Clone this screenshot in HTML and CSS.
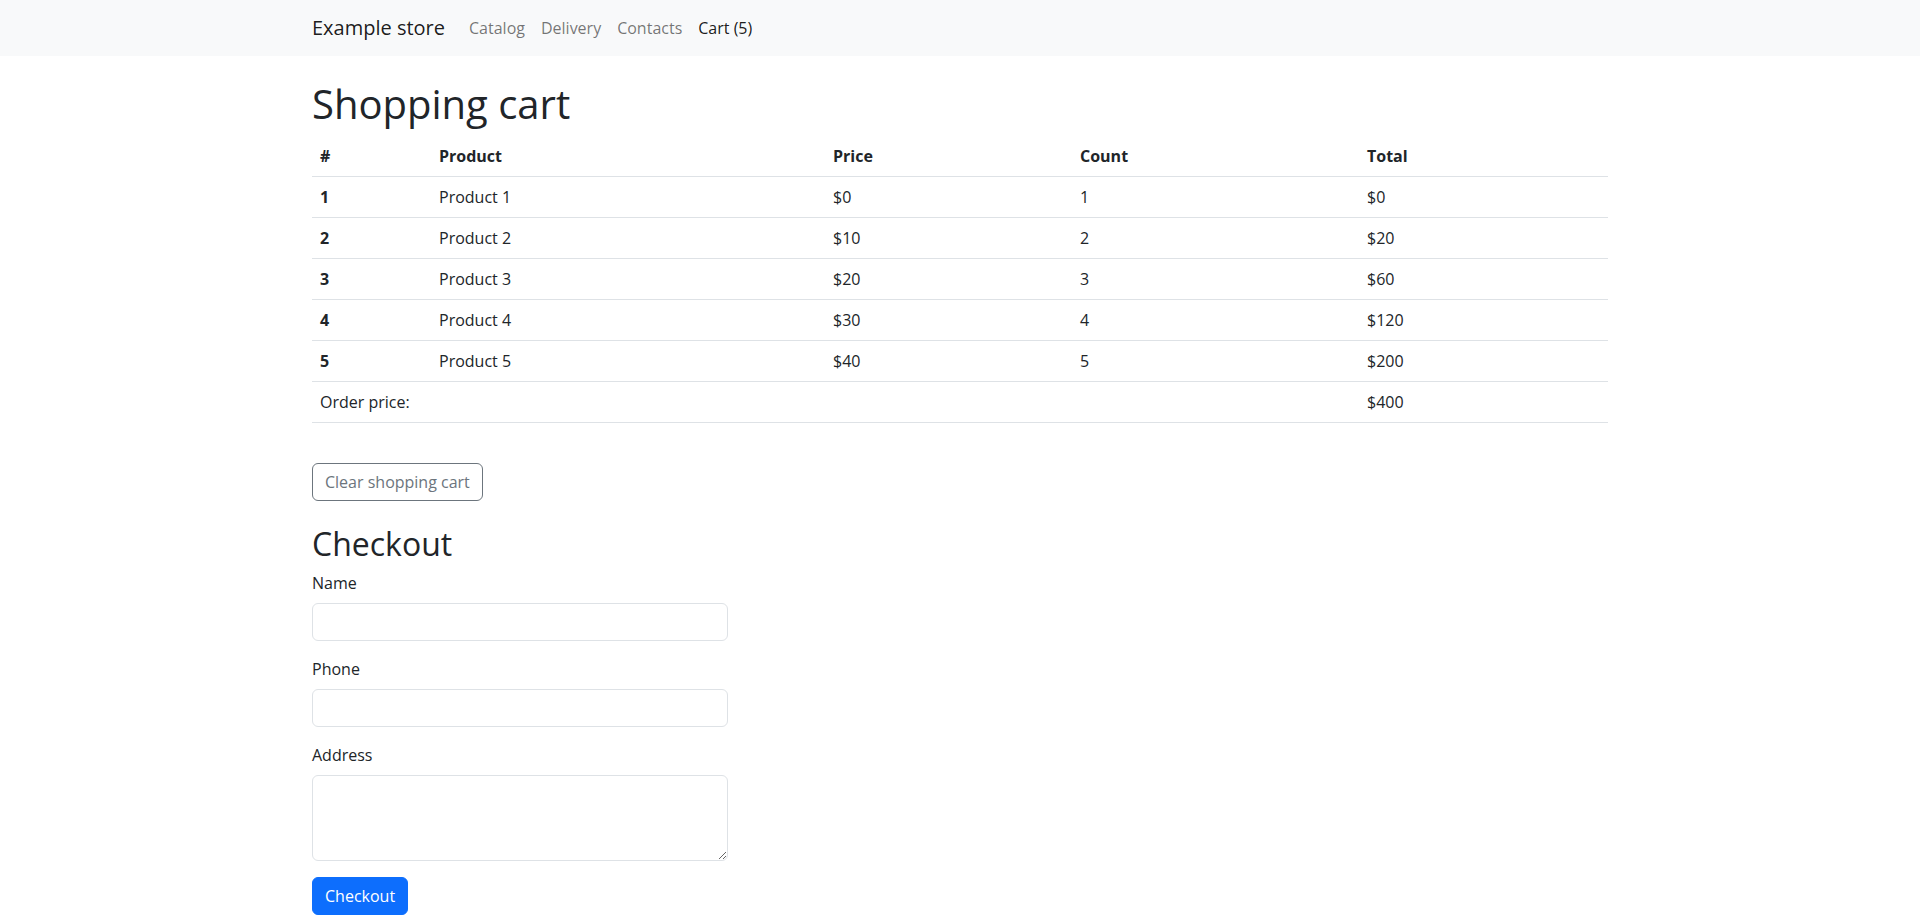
FILE: index.html
```html
<!DOCTYPE html>
<html lang="en">
<head>
<meta charset="utf-8">
<title>Example store</title>
<link rel="stylesheet" href="styles.css">
</head>
<body>
<nav class="navbar">
  <div class="container nav-inner">
    <a class="brand" href="#">Example store</a>
    <ul class="nav-links">
      <li><a class="nav-link" href="#">Catalog</a></li>
      <li><a class="nav-link" href="#">Delivery</a></li>
      <li><a class="nav-link" href="#">Contacts</a></li>
      <li><a class="nav-link active" href="#">Cart (5)</a></li>
    </ul>
  </div>
</nav>
<main class="container">
  <h1 class="title">Shopping cart</h1>
  <table class="cart-table">
    <colgroup>
      <col class="c-num">
      <col class="c-product">
      <col class="c-price">
      <col class="c-count">
      <col class="c-total">
    </colgroup>
    <thead>
      <tr><th>#</th><th>Product</th><th>Price</th><th>Count</th><th>Total</th></tr>
    </thead>
    <tbody>
      <tr><th>1</th><td>Product 1</td><td>$0</td><td>1</td><td>$0</td></tr>
      <tr><th>2</th><td>Product 2</td><td>$10</td><td>2</td><td>$20</td></tr>
      <tr><th>3</th><td>Product 3</td><td>$20</td><td>3</td><td>$60</td></tr>
      <tr><th>4</th><td>Product 4</td><td>$30</td><td>4</td><td>$120</td></tr>
      <tr><th>5</th><td>Product 5</td><td>$40</td><td>5</td><td>$200</td></tr>
      <tr><td colspan="4">Order price:</td><td>$400</td></tr>
    </tbody>
  </table>
  <div class="actions">
    <button class="btn btn-outline" type="button">Clear shopping cart</button>
  </div>
  <h2 class="subtitle">Checkout</h2>
  <form class="checkout-form">
    <div class="field">
      <label class="form-label" for="name">Name</label>
      <input class="form-control" id="name" type="text">
    </div>
    <div class="field">
      <label class="form-label" for="phone">Phone</label>
      <input class="form-control" id="phone" type="text">
    </div>
    <div class="field">
      <label class="form-label" for="address">Address</label>
      <textarea class="form-control textarea" id="address" rows="3"></textarea>
    </div>
    <button class="btn btn-primary" type="button">Checkout</button>
  </form>
</main>
</body>
</html>
```
FILE: styles.css
```css
* { box-sizing: border-box; }
body {
  margin: 0;
  font-family: "Open Sans", "Noto Sans", sans-serif;
  font-size: 16px;
  line-height: 1.5;
  color: #212529;
  background: #fff;
}
.container {
  max-width: 1320px;
  margin: 0 auto;
  padding: 0 12px;
}
.navbar {
  background: #f8f9fa;
  padding: 8px 0;
}
.nav-inner {
  display: flex;
  align-items: center;
}
.brand {
  font-size: 20px;
  line-height: 30px;
  padding: 5px 0;
  margin-right: 16px;
  color: rgba(0,0,0,.9);
  text-decoration: none;
}
.nav-links {
  display: flex;
  list-style: none;
  margin: 0;
  padding: 0;
}
.nav-link {
  display: block;
  padding: 8px;
  color: rgba(0,0,0,.55);
  text-decoration: none;
}
.nav-link.active { color: rgba(0,0,0,.9); }
.title {
  font-size: 40px;
  font-weight: 500;
  line-height: 1.2;
  margin: 24px 0 8px;
}
.cart-table {
  width: 100%;
  border-collapse: collapse;
  table-layout: fixed;
  margin-bottom: 16px;
}
.c-num { width: 119px; }
.c-product { width: 394px; }
.c-price { width: 247px; }
.c-count { width: 287px; }
.c-total { width: 249px; }
.cart-table th, .cart-table td {
  padding: 8px;
  text-align: left;
  border-bottom: 1px solid #dee2e6;
  vertical-align: top;
}
.cart-table th { font-weight: 700; }
.actions { padding-top: 24px; }
.btn {
  display: inline-block;
  font-family: inherit;
  font-size: 16px;
  line-height: 24px;
  padding: 6px 12px;
  border: 1px solid transparent;
  border-radius: 6px;
  cursor: pointer;
  vertical-align: top;
}
.btn-outline {
  color: #6c757d;
  border-color: #6c757d;
  background: transparent;
}
.btn-primary {
  color: #fff;
  background: #0d6efd;
  border-color: #0d6efd;
}
.subtitle {
  font-size: 32px;
  font-weight: 500;
  line-height: 1.2;
  margin: 24px 0 8px;
}
.checkout-form { width: 416px; }
.field { margin-bottom: 16px; }
.form-label {
  display: block;
  margin-bottom: 8px;
}
.form-control {
  display: block;
  width: 100%;
  padding: 6px 12px;
  font-family: inherit;
  font-size: 16px;
  line-height: 24px;
  height: 38px;
  color: #212529;
  background: #fff;
  border: 1px solid #dee2e6;
  border-radius: 6px;
}
.textarea { height: 86px; resize: vertical; }
```
